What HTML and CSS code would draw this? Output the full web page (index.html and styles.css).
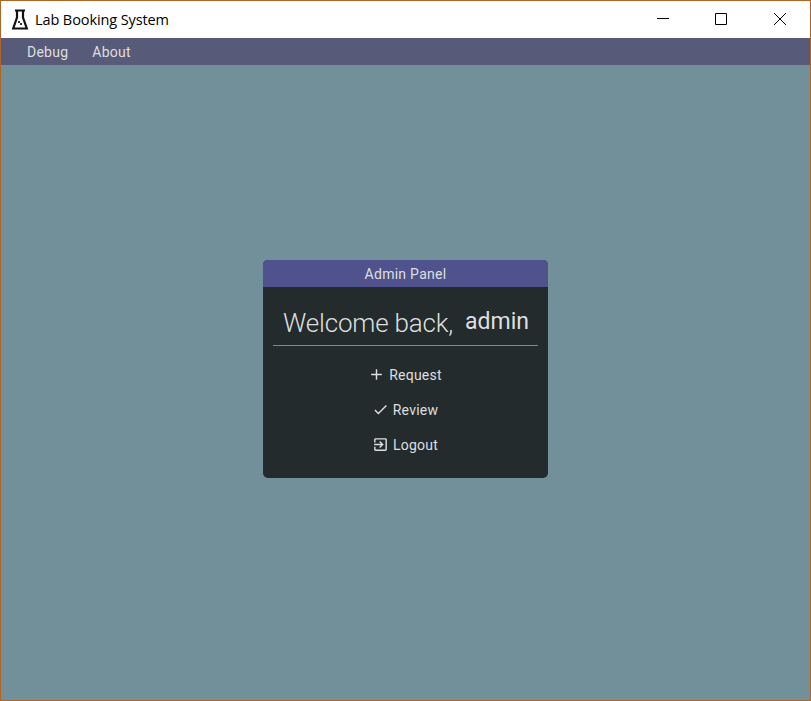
FILE: index.html
```html
<!DOCTYPE html>
<html lang="en">
<head>
<meta charset="utf-8">
<title>Lab Booking System</title>
<link rel="stylesheet" href="styles.css">
</head>
<body>
<div class="window">
  <header class="titlebar">
    <svg class="flask" width="18" height="22" viewBox="0 0 18 22"><path d="M4 1.500h10M6 1.500v7L2.200 19.500h13.600L12 8.500v-7" fill="none" stroke="#111" stroke-width="2.200"/><path d="M7 12h2v2H7zM9 14h2v2H9z" fill="#333"/></svg>
    <h1 class="title">Lab Booking System</h1>
    <div class="controls">
      <svg width="58" height="37" viewBox="0 0 58 37"><path d="M22 17.500h12"/></svg>
      <svg width="58" height="37" viewBox="0 0 58 37"><path d="M22.500 12.500h11v11h-11z"/></svg>
      <svg width="58" height="37" viewBox="0 0 58 37"><path d="M23 12l12 12M35 12l-12 12"/></svg>
    </div>
  </header>
  <nav class="menubar"><span>Debug</span><span>About</span></nav>
  <main class="content">
    <section class="panel">
      <h2 class="panel-title">Admin Panel</h2>
      <div class="panel-body">
        <div class="welcome"><span class="greeting">Welcome back,</span><span class="user">admin</span></div>
        <ul class="actions">
          <li><svg width="17" height="17" viewBox="0 0 24 24"><path d="M19.500 13H13v6.500h-2V13H4.500v-2H11V4.500h2V11h6.500v2z"/></svg><span>Request</span></li>
          <li><svg width="17" height="17" viewBox="0 0 24 24"><path d="M9 16.170 4.830 12l-1.420 1.410L9 19 21 7l-1.410-1.410z"/></svg><span>Review</span></li>
          <li><svg width="17" height="17" viewBox="0 0 24 24"><path d="M10.090 15.590 11.500 17l5-5-5-5-1.410 1.410L12.670 11H3v2h9.670l-2.580 2.590zM19 3H5c-1.110 0-2 .9-2 2v4h2V5h14v14H5v-4H3v4c0 1.100.890 2 2 2h14c1.100 0 2-.9 2-2V5c0-1.100-.9-2-2-2z"/></svg><span>Logout</span></li>
        </ul>
      </div>
    </section>
  </main>
</div>
</body>
</html>
```
FILE: styles.css
```css
* { box-sizing: border-box; }
body { margin: 0; font-family: Roboto, sans-serif; color: #dedfdf; }
.window {
  width: 811px;
  height: 701px;
  display: flex;
  flex-direction: column;
  border: 1px solid #ae6526;
  background: #719099;
}
.titlebar {
  height: 37px;
  flex: none;
  display: flex;
  align-items: center;
  padding: 0 1px 0 10px;
  background: #fff;
  color: #000;
}
.title {
  margin: 0 0 0 6px;
  font: 400 14.500px/20px "Open Sans", sans-serif;
  letter-spacing: -0.1px;
  white-space: nowrap;
}
.controls { display: flex; margin-left: auto; }
.controls svg { fill: none; stroke: #000; }
.menubar {
  height: 27px;
  flex: none;
  display: flex;
  gap: 24px;
  padding-left: 26px;
  background: #585a79;
  font-size: 14px;
  line-height: 29px;
  letter-spacing: 0.25px;
}
.content { flex: 1; display: flex; justify-content: center; align-items: flex-start; padding-top: 195px; }
.panel { width: 285px; height: 218px; border-radius: 5px; overflow: hidden; background: #232b2d; }
.panel-title {
  height: 27px;
  margin: 0;
  background: #4f528c;
  font-size: 14px;
  font-weight: 400;
  line-height: 29px;
  letter-spacing: 0.27px;
  text-align: center;
}
.panel-body { padding: 0 10px; }
.welcome {
  height: 59px;
  display: flex;
  padding: 18px 0 0 10px;
  border-bottom: 1px solid #848688;
  white-space: nowrap;
}
.greeting { width: 182px; font-size: 26px; font-weight: 300; line-height: 36px; letter-spacing: -0.18px; }
.user { font-size: 23px; line-height: 34px; }
.actions { margin: 11px 0 0; padding: 0; list-style: none; font-size: 14px; letter-spacing: 0.25px; }
.actions li { height: 35px; display: flex; justify-content: center; align-items: center; gap: 4px; }
.actions svg { fill: #dedfdf; margin-left: -1px; }
```
